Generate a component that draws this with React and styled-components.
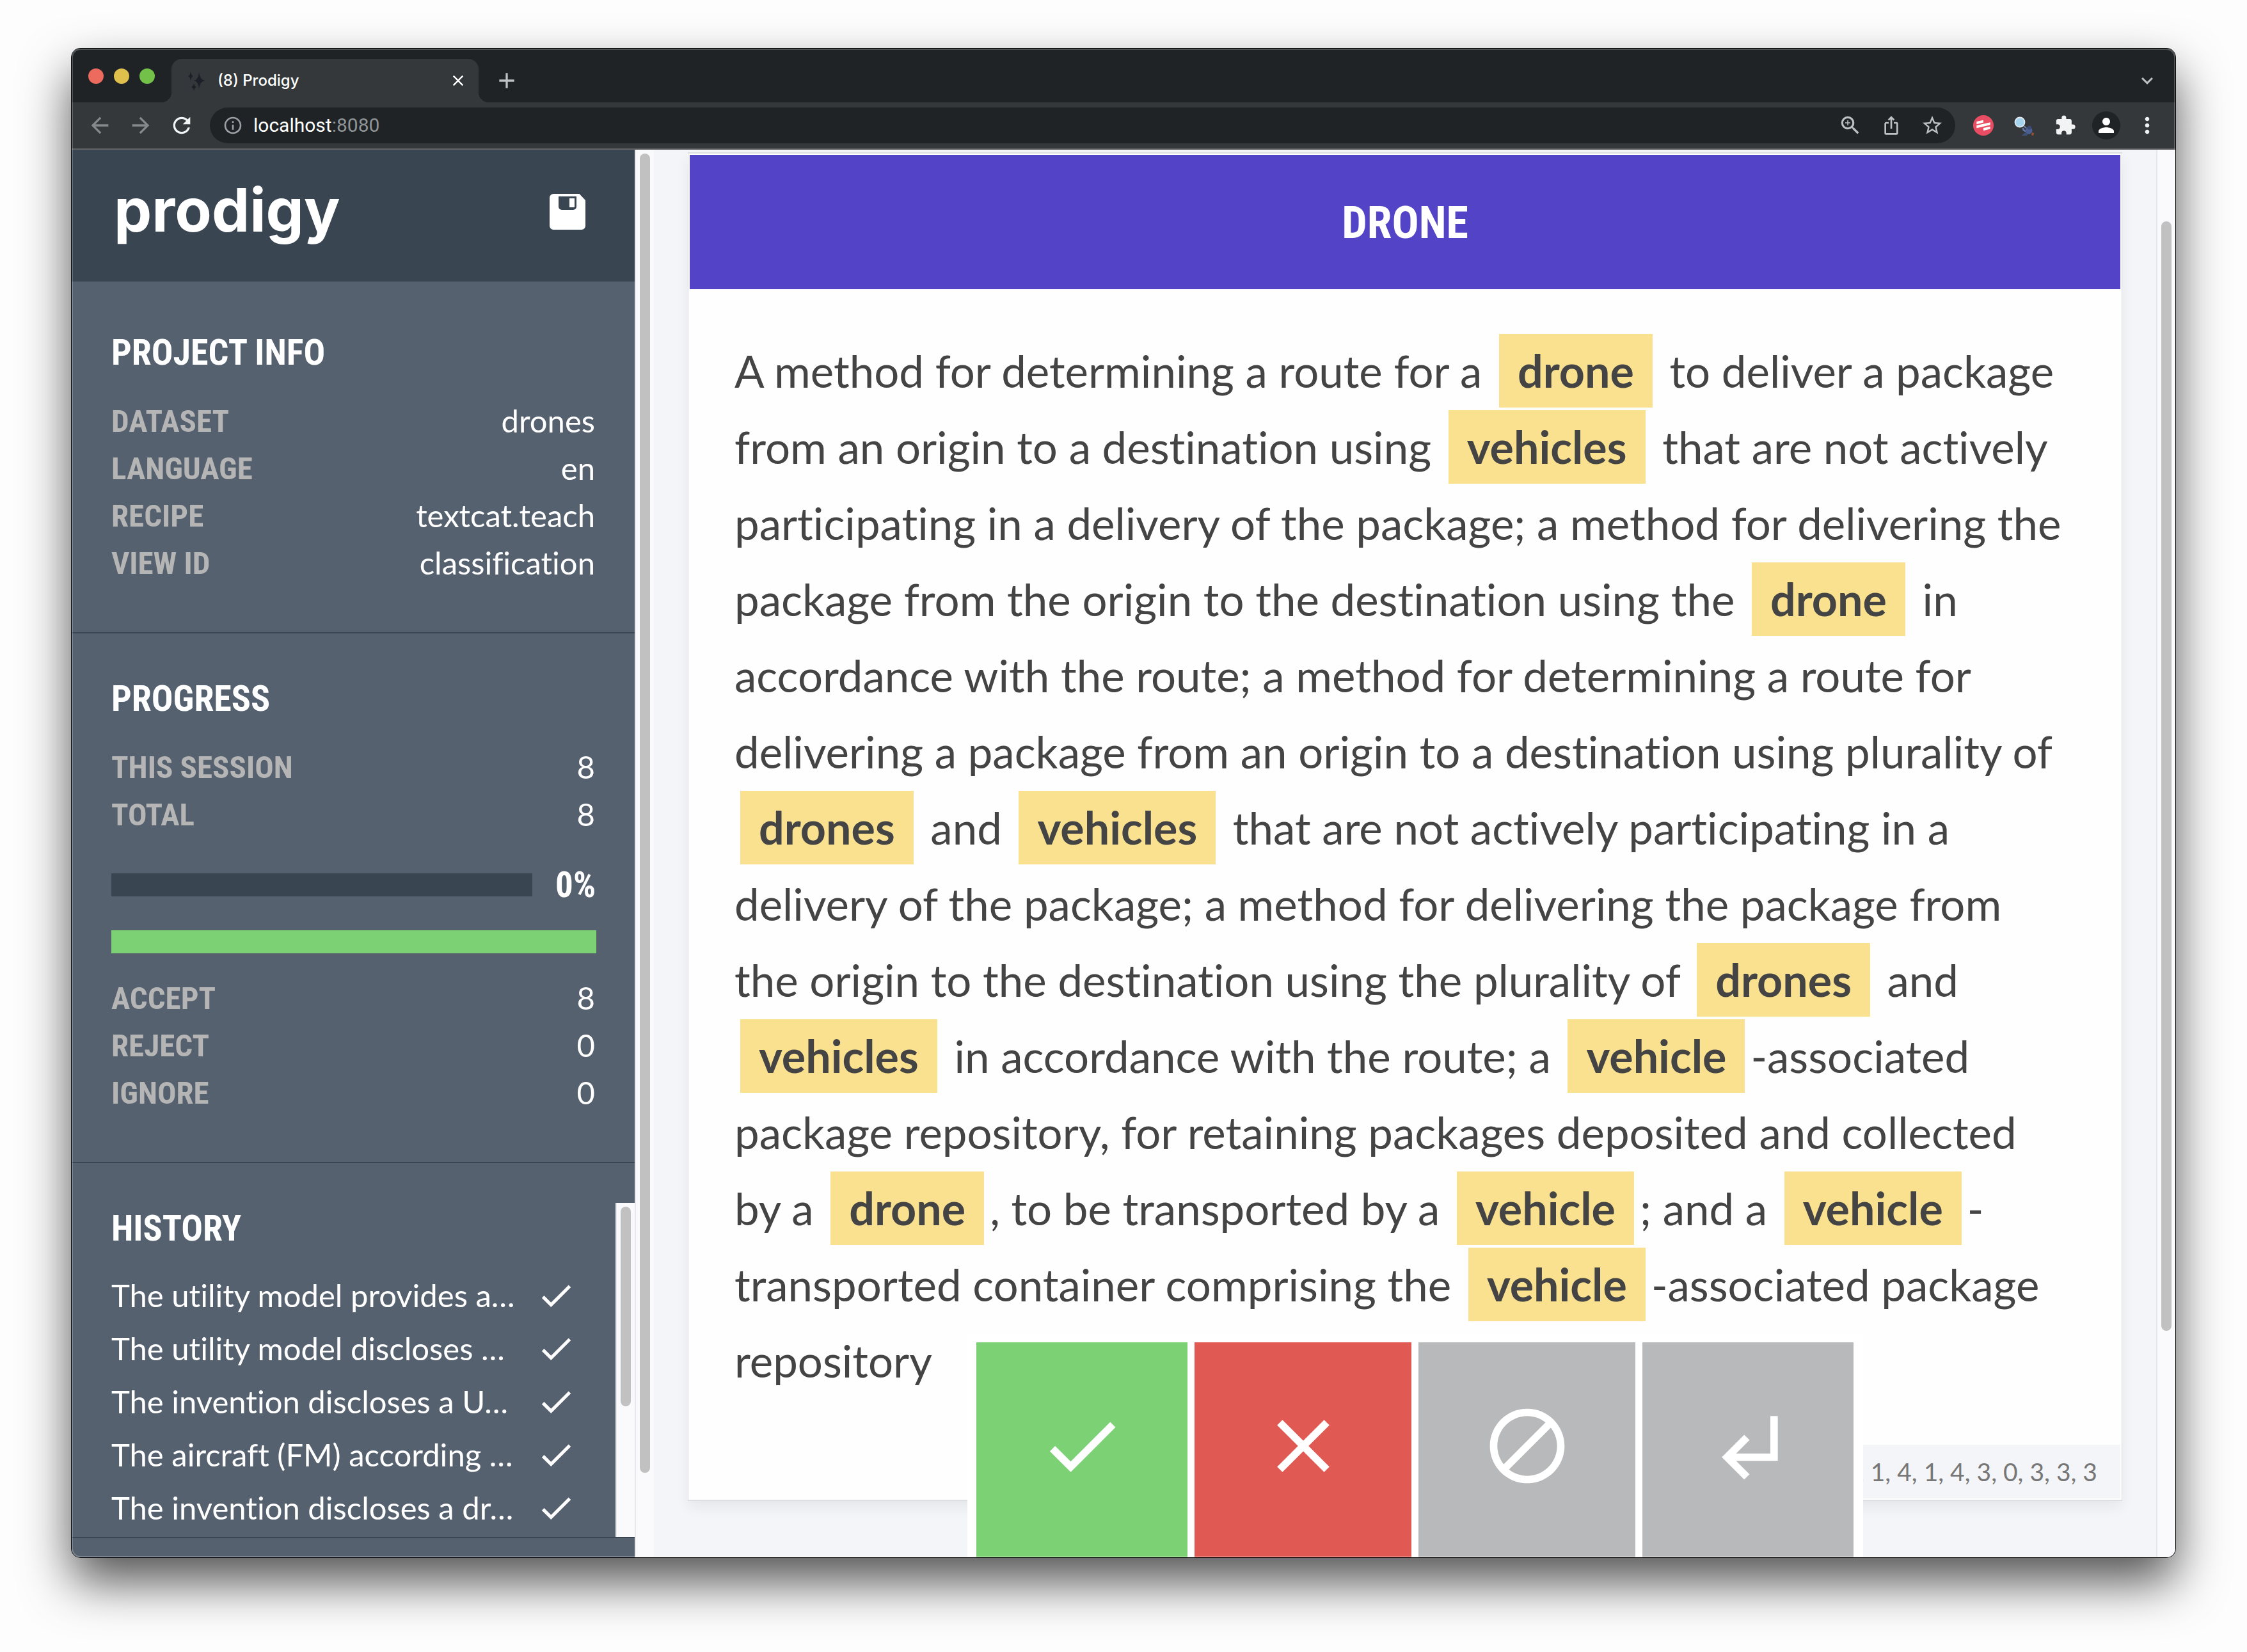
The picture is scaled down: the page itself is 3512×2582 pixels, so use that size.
import React from "react";
import styled, { createGlobalStyle } from "styled-components";
import {
  MdAdd,
  MdArrowBack,
  MdArrowForward,
  MdClose,
  MdExtension,
  MdIosShare,
  MdKeyboardArrowDown,
  MdMoreVert,
  MdOutlineInfo,
  MdPerson,
  MdRefresh,
  MdStarBorder,
  MdZoomIn,
} from "react-icons/md";

const colors = {
  chromeDark: "#1f2325",
  chrome: "#34383a",
  chromeIcon: "#bdc1c4",
  sidebar: "#56616f",
  sidebarDark: "#3a4552",
  label: "#b5b5b5",
  page: "#f4f5f8",
  text: "#444444",
  title: "#5343c6",
  mark: "#f9e190",
  accept: "#7bd174",
  reject: "#e05a53",
  neutral: "#b8b9bb",
};

const condensed = `"Roboto Condensed", "Liberation Sans Narrow", Roboto, sans-serif`;
const body = `Lato, sans-serif`;
const system = `Inter, Roboto, sans-serif`;

const GlobalStyle = createGlobalStyle`
  *, *::before, *::after { box-sizing: border-box; }
  body { margin: 0; background: #fdfdfe; font-family: ${body}; }
  h1, h2, p, dl, dd, ul { margin: 0; padding: 0; }
  ul { list-style: none; }
  button { border: 0; padding: 0; margin: 0; background: none; color: inherit; font: inherit; cursor: pointer; }
  svg { display: block; flex: none; }
`;

const Desktop = styled.div`
  display: flex;
  height: 100vh;
  padding: 76px 112px 148px;
  overflow: hidden;
`;

const Window = styled.div`
  position: relative;
  flex: 1;
  min-width: 0;
  display: flex;
  flex-direction: column;
  overflow: hidden;
  border-radius: 14px;
  background: ${colors.page};
  box-shadow: 0 0 0 1px #000, 0 38px 78px rgba(0, 0, 0, 0.68);

  &::after {
    content: "";
    position: absolute;
    inset: 0;
    border-radius: 14px;
    box-shadow: inset 0 0 0 2px rgba(255, 255, 255, 0.22);
    pointer-events: none;
  }
`;

/* Browser chrome */

const TabStrip = styled.div`
  flex: none;
  display: flex;
  align-items: flex-end;
  height: 84px;
  padding: 0 24px 0 26px;
  background: ${colors.chromeDark};
`;

const TrafficLights = styled.div`
  display: flex;
  gap: 16px;
  padding-bottom: 29px;
  margin-right: 26px;
`;

const Light = styled.button`
  width: 24px;
  height: 24px;
  border-radius: 50%;
  background: ${(p) => p.$color};
`;

const Tab = styled.div`
  position: relative;
  display: flex;
  align-items: center;
  width: 480px;
  height: 68px;
  padding: 0 18px 0 26px;
  border-radius: 16px 16px 0 0;
  background: ${colors.chrome};
  color: #fff;
  font: 500 24px/30px ${system};

  &::before,
  &::after {
    content: "";
    position: absolute;
    bottom: 0;
    width: 16px;
    height: 16px;
  }
  &::before {
    right: 100%;
    background: radial-gradient(circle at 0 0, transparent 16px, ${colors.chrome} 16px);
  }
  &::after {
    left: 100%;
    background: radial-gradient(circle at 100% 0, transparent 16px, ${colors.chrome} 16px);
  }
`;

const TabTitle = styled.span`
  flex: 1;
  margin-left: 18px;
`;

const IconButton = styled.button`
  display: flex;
  align-items: center;
  justify-content: center;
  flex: none;
  width: ${(p) => p.$width || 64}px;
  height: ${(p) => p.$height || 56}px;
  color: ${(p) => p.$color || colors.chromeIcon};
`;

const TabStripEnd = styled.div`
  flex: 1;
  display: flex;
  justify-content: space-between;
  align-items: center;
  height: 68px;
  padding: 0 0 0 12px;
`;

const Toolbar = styled.div`
  flex: none;
  display: flex;
  align-items: center;
  height: 74px;
  padding: 0 12px;
  background: ${colors.chrome};
  border-bottom: 2px solid #626364;
`;

const AddressBar = styled.div`
  flex: 1;
  display: flex;
  align-items: center;
  height: 56px;
  margin: 0 12px 0 12px;
  padding: 0 4px 0 20px;
  border-radius: 28px;
  background: ${colors.chromeDark};
  color: #9aa0a6;
`;

const Address = styled.div`
  flex: 1;
  margin-left: 16px;
  color: #8f9497;
  font: 400 30px/36px Roboto, sans-serif;
`;

const Host = styled.span`
  color: #fff;
`;

const Avatar = styled.span`
  display: flex;
  align-items: center;
  justify-content: center;
  width: 44px;
  height: 44px;
  border-radius: 50%;
  background: ${colors.chromeDark};
  color: #fff;
`;

/* Page */

const Page = styled.div`
  flex: 1;
  min-height: 0;
  display: flex;
  font-variant-ligatures: none;
`;

const Sidebar = styled.aside`
  flex: none;
  display: flex;
  flex-direction: column;
  width: 880px;
  background: ${colors.sidebar};
  color: #fff;
`;

const SidebarHeader = styled.header`
  flex: none;
  display: flex;
  align-items: center;
  justify-content: space-between;
  height: 206px;
  padding: 0 77px 12px 66px;
  background: ${colors.sidebarDark};
`;

const Logo = styled.h1`
  padding-bottom: 6px;
  font-family: Inter, sans-serif;
  font-size: 94px;
  font-weight: 700;
  line-height: 112px;
`;

const SidebarBody = styled.div`
  flex: 1;
  min-height: 0;
  display: flex;
  flex-direction: column;
  padding-top: 9px;
`;

const Section = styled.section`
  flex: none;
  padding: 70px 60px 72px 62px;
  border-bottom: 2px solid ${colors.sidebarDark};
`;

const HistorySection = styled.section`
  flex: 1;
  min-height: 0;
  display: flex;
  margin-bottom: 30px;
  padding-top: 62px;
  border-bottom: 2px solid ${colors.sidebarDark};
`;

const HistoryContent = styled.div`
  flex: 1;
  overflow: hidden;
  padding: 8px 62px 0;
`;

const Heading = styled.h2`
  margin-bottom: ${(p) => (p.$tight ? 31 : 37)}px;
  font-family: ${condensed};
  font-size: 56px;
  font-weight: 700;
  line-height: 64px;
  text-transform: uppercase;
`;

const Facts = styled.dl`
  display: grid;
  grid-template-columns: auto 1fr;
`;

const Label = styled.dt`
  padding-top: 4px;
  color: ${colors.label};
  font-family: ${condensed};
  font-size: 49px;
  font-weight: 700;
  line-height: 70px;
  text-transform: uppercase;
`;

const Value = styled.dd`
  padding-right: 2px;
  text-align: right;
  font-size: 49px;
  line-height: 74px;
`;

const ProgressRow = styled.div`
  display: flex;
  align-items: center;
  gap: 36px;
  margin-top: 42px;
`;

const Bar = styled.div`
  flex: 1;
  height: 36px;
  background: ${colors.sidebarDark};
`;

const StackedBar = styled(Bar)`
  margin: 39px 0 32px;
`;

const Fill = styled.div`
  height: 100%;
  background: ${colors.accept};
`;

const Percent = styled.span`
  padding-right: 1px;
  font-family: ${condensed};
  font-size: 55px;
  font-weight: 700;
  line-height: 64px;
`;

const HistoryRow = styled.li`
  display: flex;
  align-items: center;
  justify-content: space-between;
  height: 83px;
  font-size: 49px;
  line-height: 83px;
  white-space: nowrap;
`;

const ScrollTrack = styled.div`
  flex: none;
  width: 30px;
  padding: 6px 6px 0;
  border-left: 2px solid #e7e8ec;
  background: #fafafd;
`;

const ScrollThumb = styled.div`
  width: 16px;
  height: ${(p) => p.$size};
  margin-top: ${(p) => p.$start || "0"};
  border-radius: 8px;
  background: #c1c1c2;
`;

const Main = styled.main`
  position: relative;
  flex: 1;
  min-width: 0;
  padding: 4px 53px 0;
`;

const Card = styled.article`
  padding: 2px;
  border: 2px solid #dddee0;
  border-width: 2px 1px;
  background: #fefefe;
  box-shadow: 0 10px 20px rgba(0, 0, 0, 0.06);
`;

const CardTitle = styled.h2`
  padding: 65px 0 63px;
  background: ${colors.title};
  color: #fff;
  text-align: center;
  text-transform: uppercase;
  font-family: ${condensed};
  font-size: 70px;
  font-weight: 700;
  line-height: 82px;
`;

const Passage = styled.p`
  padding: 68px 84px 72px 70px;
  color: ${colors.text};
  font-size: 69px;
  line-height: 119px;
`;

const Mark = styled.mark`
  display: inline-block;
  margin: 0 9px;
  padding: 22px 29px 23px;
  background: ${colors.mark};
  color: inherit;
  font-size: 70px;
  font-weight: 700;
  line-height: 70px;
`;

const CardFooter = styled.footer`
  display: flex;
  justify-content: flex-end;
`;

const Meta = styled.div`
  padding: 0 36px;
  background: ${colors.page};
  color: #777;
  font-size: 39px;
  line-height: 84px;
`;

const Actions = styled.div`
  position: absolute;
  right: 458px;
  bottom: 0;
  display: grid;
  grid-template-columns: repeat(4, 1fr);
  width: 1400px;
  padding-top: 14px;
  background: #fff;
`;

const Action = styled.button`
  display: flex;
  align-items: center;
  justify-content: center;
  height: 336px;
  padding-bottom: 12px;
  background: ${(p) => p.$color};
  background-clip: padding-box;
  border: solid #fff;
  border-width: 0 6px 0 5px;
  color: #fff;

  &:first-child {
    border-left-width: 14px;
  }
  &:last-child {
    border-right-width: 15px;
  }
`;

/* Icons */

const paths = {
  check: "M9 16.17L4.83 12l-1.42 1.41L9 19 21 7l-1.41-1.41z",
  close:
    "M19 6.41L17.59 5 12 10.59 6.41 5 5 6.41 10.59 12 5 17.59 6.41 19 12 13.41 17.59 19 19 17.59 13.41 12z",
  block:
    "M12 2C6.48 2 2 6.48 2 12s4.48 10 10 10 10-4.48 10-10S17.52 2 12 2zM4 12c0-4.42 3.58-8 8-8 1.85 0 3.55.63 4.9 1.69L5.69 16.9C4.63 15.55 4 13.85 4 12zm8 8c-1.85 0-3.55-.63-4.9-1.69L18.31 7.1C19.37 8.45 20 10.15 20 12c0 4.42-3.58 8-8 8z",
  undo: "M11 9l1.42 1.42L8.83 14H18V4h2v12H8.83l3.59 3.58L11 21l-6-6 6-6z",
};

const Glyph = ({ name, size }) => (
  <svg width={size} height={size} viewBox="0 0 24 24" fill="currentColor" aria-hidden="true">
    <path d={paths[name]} />
  </svg>
);

const SaveIcon = () => (
  <svg width="56" height="56" viewBox="0 0 56 56" aria-hidden="true">
    <path
      fill="#fff"
      fillRule="evenodd"
      d="M6 0H46.500L56 10V50a6 6 0 0 1-6 6H6a6 6 0 0 1-6-6V6a6 6 0 0 1 6-6zM14 4V20a5 5 0 0 0 5 5H37a5 5 0 0 0 5-5V4zM31 7h8v14h-8z"
    />
  </svg>
);

const Sparkles = () => (
  <svg width="28" height="32" viewBox="0 0 28 32" fill="#1b2029" aria-hidden="true">
    <path d="M17 3Q18 15 27 16Q18 17 17 29Q16 17 9 16Q16 15 17 3z" />
    <path d="M4 2Q5 8 8 9Q5 10 4 16Q3 10 0 9Q3 8 4 2z" />
    <path d="M9 20Q10 25 13 26Q10 27 9 32Q8 27 5 26Q8 25 9 20z" />
  </svg>
);

const StripesBadge = () => (
  <svg width="32" height="32" viewBox="0 0 32 32" aria-hidden="true">
    <circle cx="16" cy="16" r="16" fill="#e84d63" />
    <g fill="#fff">
      <path d="M5.300 10L16 7.700V11.500L5.300 14.300z" />
      <path d="M5.300 16L26.700 11.300V15.300L5.300 20.300z" />
      <path d="M16 20L26.700 17.700V21.500L16 24.200z" />
    </g>
  </svg>
);

const LensIcon = () => (
  <svg width="32" height="32" viewBox="0 0 32 32" aria-hidden="true">
    <circle cx="9" cy="11" r="7.500" fill="#a5d5ee" stroke="#e3e9f2" strokeWidth="1.800" />
    <path d="M15 17l4 3" stroke="#6f83ad" strokeWidth="2" />
    <path d="M14 20q0 5 5 5" fill="none" stroke="#6379a8" strokeWidth="2.500" />
    <circle cx="23" cy="24" r="5.500" fill="#4c5f92" />
    <circle cx="24" cy="19.500" r="3" fill="#3b4a78" />
    <path fill="#3f5078" d="M11 32l7-5 4 3-3 2z" />
    <path fill="#9c5230" d="M28 27l3 1-1 4-3-1z" />
  </svg>
);

/* Data */

const project = [
  ["Dataset", "drones"],
  ["Language", "en"],
  ["Recipe", "textcat.teach"],
  ["View ID", "classification"],
];
const session = [
  ["This session", 8],
  ["Total", 8],
];
const decisions = [
  ["Accept", 8],
  ["Reject", 0],
  ["Ignore", 0],
];
const history = [
  "The utility model provides a…",
  "The utility model discloses …",
  "The invention discloses a U…",
  "The aircraft (FM) according …",
  "The invention discloses a dr…",
];

const FactList = ({ items }) => (
  <Facts>
    {items.map(([label, value]) => (
      <React.Fragment key={label}>
        <Label>{label}</Label>
        <Value>{value}</Value>
      </React.Fragment>
    ))}
  </Facts>
);

const Browser = () => (
  <>
    <TabStrip>
      <TrafficLights>
        <Light $color="#ec6a5e" aria-label="Close window" />
        <Light $color="#dfc04c" aria-label="Minimise window" />
        <Light $color="#73c148" aria-label="Zoom window" />
      </TrafficLights>
      <Tab>
        <Sparkles />
        <TabTitle>(8) Prodigy</TabTitle>
        <IconButton $width={28} $color="#fff" aria-label="Close tab">
          <MdClose size={28} />
        </IconButton>
      </Tab>
      <TabStripEnd>
        <IconButton aria-label="New tab">
          <MdAdd size={40} />
        </IconButton>
        <IconButton $width={40} aria-label="Search tabs">
          <MdKeyboardArrowDown size={36} />
        </IconButton>
      </TabStripEnd>
    </TabStrip>
    <Toolbar>
      <IconButton $color="#85898b" aria-label="Back">
        <MdArrowBack size={40} />
      </IconButton>
      <IconButton $color="#85898b" aria-label="Forward">
        <MdArrowForward size={40} />
      </IconButton>
      <IconButton $color="#f1f3f4" aria-label="Reload">
        <MdRefresh size={40} />
      </IconButton>
      <AddressBar>
        <MdOutlineInfo size={32} />
        <Address>
          <Host>localhost</Host>:8080
        </Address>
        <IconButton aria-label="Page zoom">
          <MdZoomIn size={38} />
        </IconButton>
        <IconButton aria-label="Share">
          <MdIosShare size={32} />
        </IconButton>
        <IconButton aria-label="Bookmark">
          <MdStarBorder size={36} />
        </IconButton>
      </AddressBar>
      <IconButton aria-label="Extension one">
        <StripesBadge />
      </IconButton>
      <IconButton aria-label="Extension two">
        <LensIcon />
      </IconButton>
      <IconButton $color="#f1f3f4" aria-label="Extensions">
        <MdExtension size={34} />
      </IconButton>
      <IconButton aria-label="Profile">
        <Avatar>
          <MdPerson size={36} />
        </Avatar>
      </IconButton>
      <IconButton $color="#f1f3f4" aria-label="Menu">
        <MdMoreVert size={40} />
      </IconButton>
    </Toolbar>
  </>
);

const SidePanel = () => {
  const total = decisions.reduce((sum, [, count]) => sum + count, 0);
  const accepted = (100 * decisions[0][1]) / total;
  return (
    <Sidebar>
      <SidebarHeader>
        <Logo>prodigy</Logo>
        <button aria-label="Save">
          <SaveIcon />
        </button>
      </SidebarHeader>
      <SidebarBody>
        <Section>
          <Heading>Project info</Heading>
          <FactList items={project} />
        </Section>
        <Section>
          <Heading>Progress</Heading>
          <FactList items={session} />
          <ProgressRow>
            <Bar role="progressbar" aria-label="Progress" aria-valuenow={0}>
              <Fill style={{ width: "0%" }} />
            </Bar>
            <Percent>0%</Percent>
          </ProgressRow>
          <StackedBar>
            <Fill style={{ width: `${accepted}%` }} />
          </StackedBar>
          <FactList items={decisions} />
        </Section>
        <HistorySection>
          <HistoryContent>
            <Heading $tight>History</Heading>
            <ul>
              {history.map((text) => (
                <HistoryRow key={text}>
                  <span>{text}</span>
                  <Glyph name="check" size={62} />
                </HistoryRow>
              ))}
            </ul>
          </HistoryContent>
          <ScrollTrack>
            <ScrollThumb $size="312px" />
          </ScrollTrack>
        </HistorySection>
      </SidebarBody>
    </Sidebar>
  );
};

export default function App() {
  return (
    <Desktop>
      <GlobalStyle />
      <Window>
        <Browser />
        <Page>
          <SidePanel />
          <ScrollTrack>
            <ScrollThumb $size="94%" />
          </ScrollTrack>
          <Main>
            <Card>
              <CardTitle>Drone</CardTitle>
              <Passage>
                A method for determining a route for a <Mark>drone</Mark> to deliver a package from an
                origin to a destination using <Mark>vehicles</Mark> that are not actively
                participating in a delivery of the package; a method for delivering the package from
                the origin to the destination using the <Mark>drone</Mark> in accordance with the
                route; a method for determining a route for delivering a package from an origin to a
                destination using plurality of <Mark>drones</Mark> and <Mark>vehicles</Mark> that are
                not actively participating in a delivery of the package; a method for delivering the
                package from the origin to the destination using the plurality of{" "}
                <Mark>drones</Mark> and <Mark>vehicles</Mark> in accordance with the route; a{" "}
                <Mark>vehicle</Mark>-associated package repository, for retaining packages deposited
                and collected by a <Mark>drone</Mark>, to be transported by a <Mark>vehicle</Mark>;
                and a <Mark>vehicle</Mark>-transported container comprising the{" "}
                <Mark>vehicle</Mark>-associated package repository
              </Passage>
              <CardFooter>
                <Meta>, 1, 4, 1, 4, 3, 0, 3, 3, 3</Meta>
              </CardFooter>
            </Card>
            <Actions>
              <Action $color={colors.accept} aria-label="Accept">
                <Glyph name="check" size={140} />
              </Action>
              <Action $color={colors.reject} aria-label="Reject">
                <Glyph name="close" size={140} />
              </Action>
              <Action $color={colors.neutral} aria-label="Ignore">
                <Glyph name="block" size={140} />
              </Action>
              <Action $color={colors.neutral} aria-label="Undo">
                <Glyph name="undo" size={140} />
              </Action>
            </Actions>
          </Main>
          <ScrollTrack>
            <ScrollThumb $size="1734px" $start="106px" />
          </ScrollTrack>
        </Page>
      </Window>
    </Desktop>
  );
}
